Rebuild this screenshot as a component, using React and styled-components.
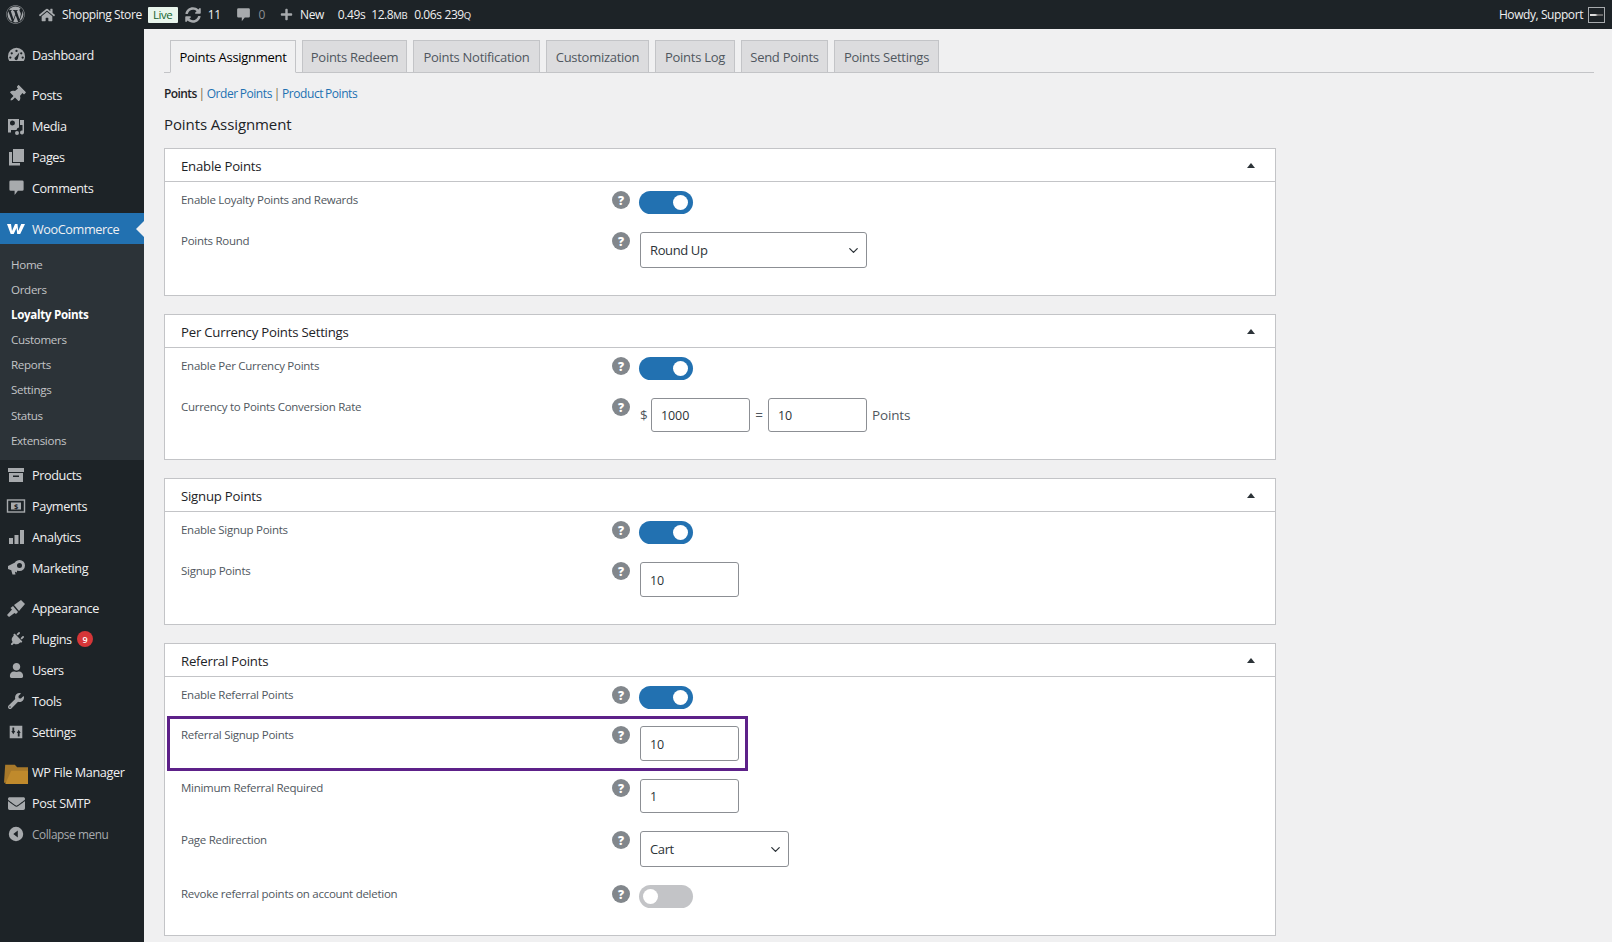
import React from "react";
import styled, { createGlobalStyle } from "styled-components";
import { FaWordpress, FaHome, FaSyncAlt, FaPlus, FaThumbtack, FaPlug, FaUser, FaWrench, FaEnvelope } from "react-icons/fa";
import { ChevronDown } from "lucide-react";

const Global = createGlobalStyle`
  html, body { margin: 0; padding: 0; background: #f0f0f1; }
  body { font-family: "Open Sans", "Noto Sans", sans-serif; font-size: 13px; color: #3c434a; }
  * { box-sizing: border-box; }
`;

const Page = styled.div`width: 1612px; height: 942px; overflow: hidden; display: flex; flex-direction: column;`;
const TopBar = styled.header`height: 29px; flex: none; background: #1d2327; color: #f0f0f1; display: flex; align-items: center; font-size: 12px; letter-spacing: -0.42px; padding-left: 6px; padding-right: 7px;`;
const BarItem = styled.span`display: inline-flex; align-items: center; gap: ${p => p.$gap ?? 6}px; margin-left: ${p => p.$ml ?? 0}px; color: ${p => p.$dim ? "#8c8f94" : "#f0f0f1"}; svg { color: #a7aaad; flex: none; }`;
const Live = styled.span`width: 30px; height: 16px; margin-left: 6px; background: #e8f5ec; color: #14642f; font-size: 11.5px; font-weight: 500; border-radius: 1px; display: inline-flex; align-items: center; justify-content: center;`;
const Small = styled.small`font-size: 9.5px;`;
const Spacer = styled.div`flex: 1;`;
const Avatar = styled.span`width: 17px; height: 16px; border: 1px solid #a7aaad; margin-left: 5px; display: inline-flex; align-items: center; justify-content: center; &::after { content: ""; width: 13px; height: 2px; background: linear-gradient(90deg, #ddd 40%, #666 60%); }`;

const Body = styled.div`flex: 1; display: flex; min-height: 0;`;
const Side = styled.nav`width: 144px; flex: none; background: #1d2327; padding-top: 10px; display: flex; flex-direction: column;`;
const MenuItem = styled.div`height: 31px; flex: none; display: flex; align-items: center; color: ${p => p.$dim ? "#a7aaad" : "#f0f0f1"}; background: ${p => p.$active ? "#2271b1" : "transparent"}; margin-top: ${p => p.$sep ?? 0}px; position: relative; font-size: ${p => p.$dim ? 11.8 : 12.7}px; letter-spacing: -0.4px; white-space: nowrap; ${p => p.$active && `&::after { content: ""; position: absolute; right: 0; top: 8px; border: 8px solid transparent; border-right-color: #f0f0f1; border-left: 0; }`}`;
const IconSlot = styled.span`width: 32px; flex: none; display: flex; justify-content: center; align-items: center; color: ${p => p.$active ? "#fff" : "#a7aaad"};`;
const Badge = styled.span`width: 16px; height: 16px; border-radius: 50%; background: #d63638; color: #fff; font-size: 9px; font-weight: 600; margin-left: 5px; display: inline-flex; align-items: center; justify-content: center;`;
const Sub = styled.div`background: #2c3338; padding: 7.5px 0 6.5px; flex: none;`;
const SubItem = styled.div`height: 25.2px; line-height: 25px; padding-left: 11px; font-size: 11.6px; letter-spacing: -0.32px; color: ${p => p.$on ? "#fff" : "#c3c4c7"}; font-weight: ${p => p.$on ? 700 : 400};`;

const Main = styled.main`flex: 1; padding: 11px 18px 0 20px; min-width: 0;`;
const Tabs = styled.div`display: flex; gap: 6px; height: 33px; padding-left: 6px; border-bottom: 1px solid #c3c4c7;`;
const Tab = styled.div`height: 33px; border: 1px solid #c3c4c7; font-size: 13px; letter-spacing: -0.28px; line-height: 32px; white-space: nowrap; width: ${p => p.$w}px; text-align: center; ${p => p.$on ? "background:#f0f0f1;border-bottom-color:#f0f0f1;color:#000;font-weight:500;" : "background:#dcdcde;color:#50575e;"}`;
const SubNav = styled.div`margin-top: 12px; height: 18px; line-height: 18px; font-size: 12px; letter-spacing: -0.42px; word-spacing: -0.8px; color: #7a6a45; a { color: #2271b1; text-decoration: none; } b { color: #1d2327; font-weight: 600; letter-spacing: -0.6px; }`;
const Heading = styled.h2`margin: 11px 0 14px; height: 20px; line-height: 20px; font-size: 15px; font-weight: 500; color: #1d2327; letter-spacing: -0.1px;`;

const Panel = styled.section`width: 1112px; background: #fff; border: 1px solid #c3c4c7; margin-bottom: ${p => p.$mb ?? 18}px;`;
const PanelHead = styled.div`height: 33px; padding: 1px 20px 0 16px; border-bottom: 1px solid #c3c4c7; display: flex; align-items: center; justify-content: space-between; font-size: 13.2px; letter-spacing: -0.22px; color: #1d2327;`;
const Caret = styled.span`width: 0; height: 0; border: 4px solid transparent; border-bottom: 5px solid #2c3338; border-top: 0;`;
const PanelBody = styled.div`padding: 9px 0 ${p => p.$pb ?? 27}px 16px;`;
const Row = styled.div`position: relative; display: grid; grid-template-columns: 431px 27px 1fr; align-items: start; margin-top: ${p => p.$mt ?? 0}px;`;
const Label = styled.div`font-size: 11.5px; line-height: 18px; letter-spacing: -0.27px; color: #50575e;`;
const Help = styled.span`width: 18px; height: 18px; border-radius: 50%; background: #82878c; color: #fff; font-size: 12px; font-weight: 800; display: flex; align-items: center; justify-content: center;`;
const Toggle = styled.span`width: 54px; height: 23px; border-radius: 12px; display: flex; align-items: center; padding: 0 4px; background: ${p => p.$on ? "#2271b1" : "#c3c4c7"}; justify-content: ${p => p.$on ? "flex-end" : "flex-start"}; &::after { content: ""; width: 15px; height: 15px; border-radius: 50%; background: #fff; margin: 0 ${p => p.$on ? 1 : 0}px; }`;
const Field = styled.div`display: flex; align-items: center; margin-left: 1px; color: #50575e;`;
const Input = styled.input`width: ${p => p.$w ?? 99}px; height: ${p => p.$h ?? 34}px; border: 1px solid #8c8f94; border-radius: 3px; background: #fff; padding: 1px 9px 0; font: 400 12.5px "Open Sans", sans-serif; letter-spacing: -0.1px; color: #2c3338; outline: none;`;
const Select = styled.div`width: ${p => p.$w}px; height: 36px; border: 1px solid #8c8f94; border-radius: 3px; display: flex; align-items: center; justify-content: space-between; padding: 0 5px 0 9px; font-size: 13px; letter-spacing: -0.38px; color: #2c3338;`;
const Dollar = styled.span`width: 11px; font-size: 13.5px;`;
const Eq = styled.span`width: 18px; text-align: center; font-size: 13.5px;`;
const Unit = styled.span`margin-left: 5px; font-size: 13.5px; letter-spacing: -0.15px;`;
const Highlight = styled.div`position: absolute; left: -14px; top: -10px; width: 581px; height: 55px; border: 3px solid #5d2189; pointer-events: none;`;

const I = ({ children, s = 20 }) => <svg width={s} height={s} viewBox="0 0 20 20" fill="currentColor">{children}</svg>;
const Bubble = ({ s }) => <I s={s}><path d="M4 2.500h12a1.500 1.500 0 0 1 1.500 1.500v8a1.500 1.500 0 0 1-1.500 1.500h-4.500L8 18v-4.500H4A1.500 1.500 0 0 1 2.500 12V4A1.500 1.500 0 0 1 4 2.500z" /></I>;
const Icons = {
  dash: <I s={19}><path fillRule="evenodd" d="M10 3a9 9 0 0 1 9 9c0 1.800-.5 3.400-1.400 4.800H2.400A9 9 0 0 1 1 12a9 9 0 0 1 9-9zm0 2a1.200 1.200 0 1 0 0 2.400A1.200 1.200 0 0 0 10 5zM5 7.500a1.200 1.200 0 1 0 0 2.400A1.200 1.200 0 0 0 5 7.500zm10 0a1.200 1.200 0 1 0 0 2.400 1.200 1.200 0 0 0 0-2.400zM3.500 12a1.200 1.200 0 1 0 0 2.400 1.200 1.200 0 0 0 0-2.400zm13 0a1.200 1.200 0 1 0 0 2.400 1.200 1.200 0 0 0 0-2.400zM13 8l-4 4.500a1.800 1.800 0 1 0 2.500 1.800z" /></I>,
  pin: <FaThumbtack size={17} style={{ transform: "rotate(45deg)" }} />,
  media: <I><path d="M2 3h11v8.500a3 3 0 0 0-2.500 2.500H5v2.500H2zm4.500 1.500a2.500 2.500 0 1 0 0 5a2.500 2.500 0 0 0 0-5zM14 4h4v12.500a2 2 0 1 1-1.500-2V9H14zM9 17a2 2 0 1 1 4 0a2 2 0 0 1-4 0z" /></I>,
  pages: <I><path d="M7 2h11v13H7z" /><path d="M3 5h3v11h8v2.500H3z" /></I>,
  comment: <Bubble s={19} />,
  woo: <I s={20}><path d="M1 5h4l1 7 3-7h2.500l.7 7 3-7H19l-4.800 10h-3l-.7-6-2.800 6h-3z" fill="#fff" /></I>,
  box: <I><path d="M2 3h16v4H2zM3 8h14v9H3zm4 2.500v1.500h6v-1.500z" /></I>,
  pay: <I s={20}><rect x="1.500" y="4" width="17" height="12" fill="none" stroke="currentColor" strokeWidth="1.400" /><rect x="5" y="6.500" width="10" height="7" /><text x="10" y="12.800" textAnchor="middle" fontSize="7.500" fontWeight="700" fill="#1d2327" fontFamily="Open Sans, sans-serif">$</text></I>,
  chart: <I><path d="M3 11h4v6H3zM8.500 8h4v9h-4zM14 3h4v14h-4z" /></I>,
  mega: <I><path d="M2 8l9-4.500v11L2 11zM5 11.500h3.500l1 5H6.500zM13.500 2a5 5 0 0 1 0 11a5.500 5.500 0 0 1 0-11zm0 3a2.500 2.500 0 0 0 0 5a2.500 2.500 0 0 0 0-5z" /></I>,
  brush: <I><path d="M8 7l7-5 4 4-6 7z" /><path d="M7 8l5 6-2 2-1.500-1L3 19 1 17l5-5.500L4.500 10z" /></I>,
  plug: <FaPlug size={15} style={{ transform: "rotate(45deg)" }} />,
  user: <FaUser size={15} />,
  wrench: <FaWrench size={16} />,
  sliders: <I s={18}><path fillRule="evenodd" d="M3 3h14v14H3zM6 5v4H4.800L7 12.500 9.200 9H8V5zm4.800 6h1.200v4h2v-4h1.200L13 7.500z" /></I>,
  folder: <I s={24}><path d="M1 4h8l2 2h9l2 0-3 13H0z" fill="#a8792a" /><path d="M6 9h18l-4 11H1z" fill="#c08a2c" /></I>,
  mail: <FaEnvelope size={17} />,
  collapse: <I s={18}><path fillRule="evenodd" d="M10 2a8 8 0 1 1 0 16a8 8 0 0 1 0-16zm2 4L7 10l5 4z" /></I>,
};

const Menu = ({ icon, children, ...p }) => (
  <MenuItem {...p}><IconSlot $active={p.$active}>{Icons[icon]}</IconSlot>{children}</MenuItem>
);

const Setting = ({ label, children, mt, highlight }) => (
  <Row $mt={mt}>
    {highlight && <Highlight />}
    <Label>{label}</Label>
    <Help>?</Help>
    {children}
  </Row>
);

const Section = ({ title, children, pb, mb }) => (
  <Panel $mb={mb}>
    <PanelHead>{title}<Caret /></PanelHead>
    <PanelBody $pb={pb}>{children}</PanelBody>
  </Panel>
);

const tabs = [["Points Assignment", 126], ["Points Redeem", 105], ["Points Notification", 127], ["Customization", 103], ["Points Log", 80], ["Send Points", 87], ["Points Settings", 105]];

export default function App() {
  return (
    <Page>
      <Global />
      <TopBar>
        <FaWordpress size={19} color="#a7aaad" />
        <BarItem $ml={14} $gap={7}><FaHome size={16} />Shopping Store</BarItem>
        <Live>Live</Live>
        <BarItem $ml={7} $gap={7}><FaSyncAlt size={16} />11</BarItem>
        <BarItem $ml={14} $gap={7} $dim><Bubble s={17} />0</BarItem>
        <BarItem $ml={15} $gap={7}><FaPlus size={13} />New</BarItem>
        <BarItem $ml={14}>0.49s</BarItem>
        <BarItem $ml={6}><span>12.8<Small>MB</Small></span></BarItem>
        <BarItem $ml={7}>0.06s</BarItem>
        <BarItem $ml={3}><span>239<Small>Q</Small></span></BarItem>
        <Spacer />
        <BarItem>Howdy, Support</BarItem>
        <Avatar />
      </TopBar>
      <Body>
        <Side>
          <Menu icon="dash">Dashboard</Menu>
          <Menu icon="pin" $sep={9}>Posts</Menu>
          <Menu icon="media">Media</Menu>
          <Menu icon="pages">Pages</Menu>
          <Menu icon="comment">Comments</Menu>
          <Menu icon="woo" $sep={10} $active>WooCommerce</Menu>
          <Sub>
            <SubItem>Home</SubItem>
            <SubItem>Orders</SubItem>
            <SubItem $on>Loyalty Points</SubItem>
            <SubItem>Customers</SubItem>
            <SubItem>Reports</SubItem>
            <SubItem>Settings</SubItem>
            <SubItem>Status</SubItem>
            <SubItem>Extensions</SubItem>
          </Sub>
          <Menu icon="box">Products</Menu>
          <Menu icon="pay">Payments</Menu>
          <Menu icon="chart">Analytics</Menu>
          <Menu icon="mega">Marketing</Menu>
          <Menu icon="brush" $sep={9}>Appearance</Menu>
          <Menu icon="plug">Plugins<Badge>9</Badge></Menu>
          <Menu icon="user">Users</Menu>
          <Menu icon="wrench">Tools</Menu>
          <Menu icon="sliders">Settings</Menu>
          <Menu icon="folder" $sep={9}>WP File Manager</Menu>
          <Menu icon="mail">Post SMTP</Menu>
          <Menu icon="collapse" $dim>Collapse menu</Menu>
        </Side>
        <Main>
          <Tabs>
            {tabs.map(([t, w], i) => <Tab key={t} $on={i === 0} $w={w}>{t}</Tab>)}
          </Tabs>
          <SubNav><b>Points</b> | <a href="#o">Order Points</a> | <a href="#p">Product Points</a></SubNav>
          <Heading>Points Assignment</Heading>
          <Section title="Enable Points" pb={27}>
            <Setting label="Enable Loyalty Points and Rewards"><Toggle $on /></Setting>
            <Setting label="Points Round" mt={18}>
              <Field><Select $w={227}>Round Up<ChevronDown size={15} color="#2c3338" /></Select></Field>
            </Setting>
          </Section>
          <Section title="Per Currency Points Settings">
            <Setting label="Enable Per Currency Points"><Toggle $on /></Setting>
            <Setting label="Currency to Points Conversion Rate" mt={18}>
              <Field>
                <Dollar>$</Dollar>
                <Input readOnly $h={34} value="1000" />
                <Eq>=</Eq>
                <Input readOnly $h={34} value="10" />
                <Unit>Points</Unit>
              </Field>
            </Setting>
          </Section>
          <Section title="Signup Points">
            <Setting label="Enable Signup Points"><Toggle $on /></Setting>
            <Setting label="Signup Points" mt={18}>
              <Field><Input readOnly $h={35} value="10" /></Field>
            </Setting>
          </Section>
          <Section title="Referral Points" pb={27} mb={0}>
            <Setting label="Enable Referral Points"><Toggle $on /></Setting>
            <Setting label="Referral Signup Points" mt={17} highlight>
              <Field><Input readOnly $h={35} value="10" /></Field>
            </Setting>
            <Setting label="Minimum Referral Required" mt={18}>
              <Field><Input readOnly $h={34} value="1" /></Field>
            </Setting>
            <Setting label="Page Redirection" mt={18}>
              <Field><Select $w={149}>Cart<ChevronDown size={15} color="#2c3338" /></Select></Field>
            </Setting>
            <Setting label="Revoke referral points on account deletion" mt={18}><Toggle /></Setting>
          </Section>
        </Main>
      </Body>
    </Page>
  );
}
